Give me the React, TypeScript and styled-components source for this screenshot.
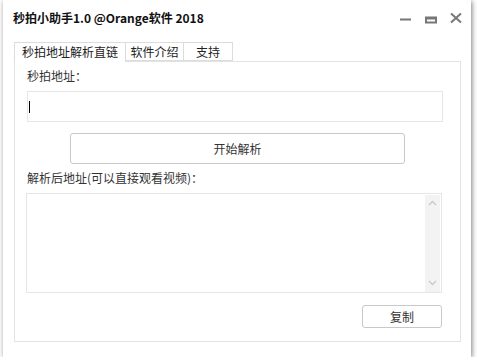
import React from 'react';
import styled, { createGlobalStyle } from 'styled-components';

const Global = createGlobalStyle`
  html, body { margin: 0; padding: 0; background: #fff; }
  body { font-family: "Noto Sans CJK SC", "Noto Sans", sans-serif; color: #333; }
  * { box-sizing: border-box; }
`;

const Window = styled.div`
  margin-left: 3px;
  width: 468px;
  height: 357px;
  background: #fff;
  box-shadow: 1px 1px 5px rgba(0, 0, 0, 0.5);
  display: flex;
  flex-direction: column;
`;

const TitleBar = styled.div`
  height: 35px;
  flex: none;
  display: flex;
  align-items: center;
  padding: 0 9px 0 10px;
`;

const Title = styled.div`
  font-size: 12px;
  font-weight: bold;
  color: #111;
  flex: 1;
  line-height: 16px;
`;

const Controls = styled.div`
  display: flex;
  gap: 13px;
  align-items: center;
`;

const ControlIcon = styled.svg`
  width: 12px;
  height: 12px;
  display: block;
  color: #777;
`;

const Body = styled.div`
  flex: 1;
  display: flex;
  flex-direction: column;
  padding: 7px 10px 15px 11px;
`;

const TabBar = styled.div`
  display: flex;
  align-items: flex-end;
  height: 19px;
  flex: none;
`;

const Tab = styled.div<{ $active?: boolean; $w: number }>`
  position: relative;
  width: ${(p) => p.$w}px;
  height: ${(p) => (p.$active ? 20 : 19)}px;
  margin-bottom: ${(p) => (p.$active ? -1 : 0)}px;
  border: 1px solid #dcdcdc;
  border-bottom: ${(p) => (p.$active ? 'none' : '1px solid #dcdcdc')};
  border-left: ${(p) => (p.$active ? '1px solid #dcdcdc' : 'none')};
  background: #fff;
  font-size: 12px;
  line-height: 17px;
  text-align: center;
  color: #222;
  z-index: ${(p) => (p.$active ? 1 : 0)};
`;

const Panel = styled.div`
  flex: 1;
  border: 1px solid #e3e3e3;
  padding: 6px 17px 0 12px;
  display: flex;
  flex-direction: column;
`;

const Label = styled.div`
  font-size: 12px;
  line-height: 16px;
  height: 16px;
  color: #333;
`;

const Input = styled.div`
  margin-top: 7px;
  height: 31px;
  border: 1px solid #e6e6e6;
  display: flex;
  align-items: center;
  padding-left: 1px;
`;

const Caret = styled.span`
  width: 1px;
  height: 12px;
  background: #000;
`;

const Button = styled.div<{ $w: number; $h: number }>`
  width: ${(p) => p.$w}px;
  height: ${(p) => p.$h}px;
  border: 1px solid #c8c8c8;
  border-radius: 3px;
  background: #fff;
  display: flex;
  align-items: center;
  justify-content: center;
  font-size: 12px;
  color: #333;
`;

const ParseButton = styled(Button)`
  margin-top: 11px;
  margin-left: 43px;
`;

const SecondLabel = styled(Label)`
  margin-top: 6px;
`;

const TextBox = styled.div`
  margin-top: 7px;
  margin-left: -1px;
  width: 416px;
  height: 100px;
  border: 1px solid #e6e6e6;
  display: flex;
  justify-content: flex-end;
  padding: 1px 1px 0 0;
`;

const Scrollbar = styled.div`
  width: 15px;
  height: 97px;
  background: #f3f3f3;
  display: flex;
  flex-direction: column;
  justify-content: space-between;
  align-items: center;
  padding: 5px 0 6px;
`;

const Arrow = styled.svg`
  width: 9px;
  height: 6px;
  display: block;
  color: #c9c9c9;
`;

const Footer = styled.div`
  margin-top: 12px;
  display: flex;
  justify-content: flex-end;
  padding-right: 1px;
`;

export default function App() {
  return (
    <>
      <Global />
      <Window>
        <TitleBar>
          <Title>秒拍小助手1.0 @Orange软件 2018</Title>
          <Controls>
            <ControlIcon viewBox="0 0 12 12">
              <rect x="0" y="6.5" width="11" height="2" fill="currentColor" />
            </ControlIcon>
            <ControlIcon viewBox="0 0 12 12">
              <path d="M0 4.5h12v7H0z M2 7.5v2h8v-2z" fill="currentColor" fillRule="evenodd" />
            </ControlIcon>
            <ControlIcon viewBox="0 0 12 12">
              <path d="M1 1.5l10 9M11 1.5l-10 9" stroke="currentColor" strokeWidth="2" fill="none" />
            </ControlIcon>
          </Controls>
        </TitleBar>
        <Body>
          <TabBar>
            <Tab $active $w={112}>秒拍地址解析直链</Tab>
            <Tab $w={58}>软件介绍</Tab>
            <Tab $w={49}>支持</Tab>
          </TabBar>
          <Panel>
            <Label>秒拍地址：</Label>
            <Input>
              <Caret />
            </Input>
            <ParseButton $w={335} $h={31}>开始解析</ParseButton>
            <SecondLabel>解析后地址(可以直接观看视频)：</SecondLabel>
            <TextBox>
              <Scrollbar>
                <Arrow viewBox="0 0 9 6">
                  <path d="M1 5l3.5-3.5L8 5" stroke="currentColor" strokeWidth="1.3" fill="none" />
                </Arrow>
                <Arrow viewBox="0 0 9 6">
                  <path d="M1 1l3.5 3.5L8 1" stroke="currentColor" strokeWidth="1.3" fill="none" />
                </Arrow>
              </Scrollbar>
            </TextBox>
            <Footer>
              <Button $w={80} $h={23}>复制</Button>
            </Footer>
          </Panel>
        </Body>
      </Window>
    </>
  );
}
